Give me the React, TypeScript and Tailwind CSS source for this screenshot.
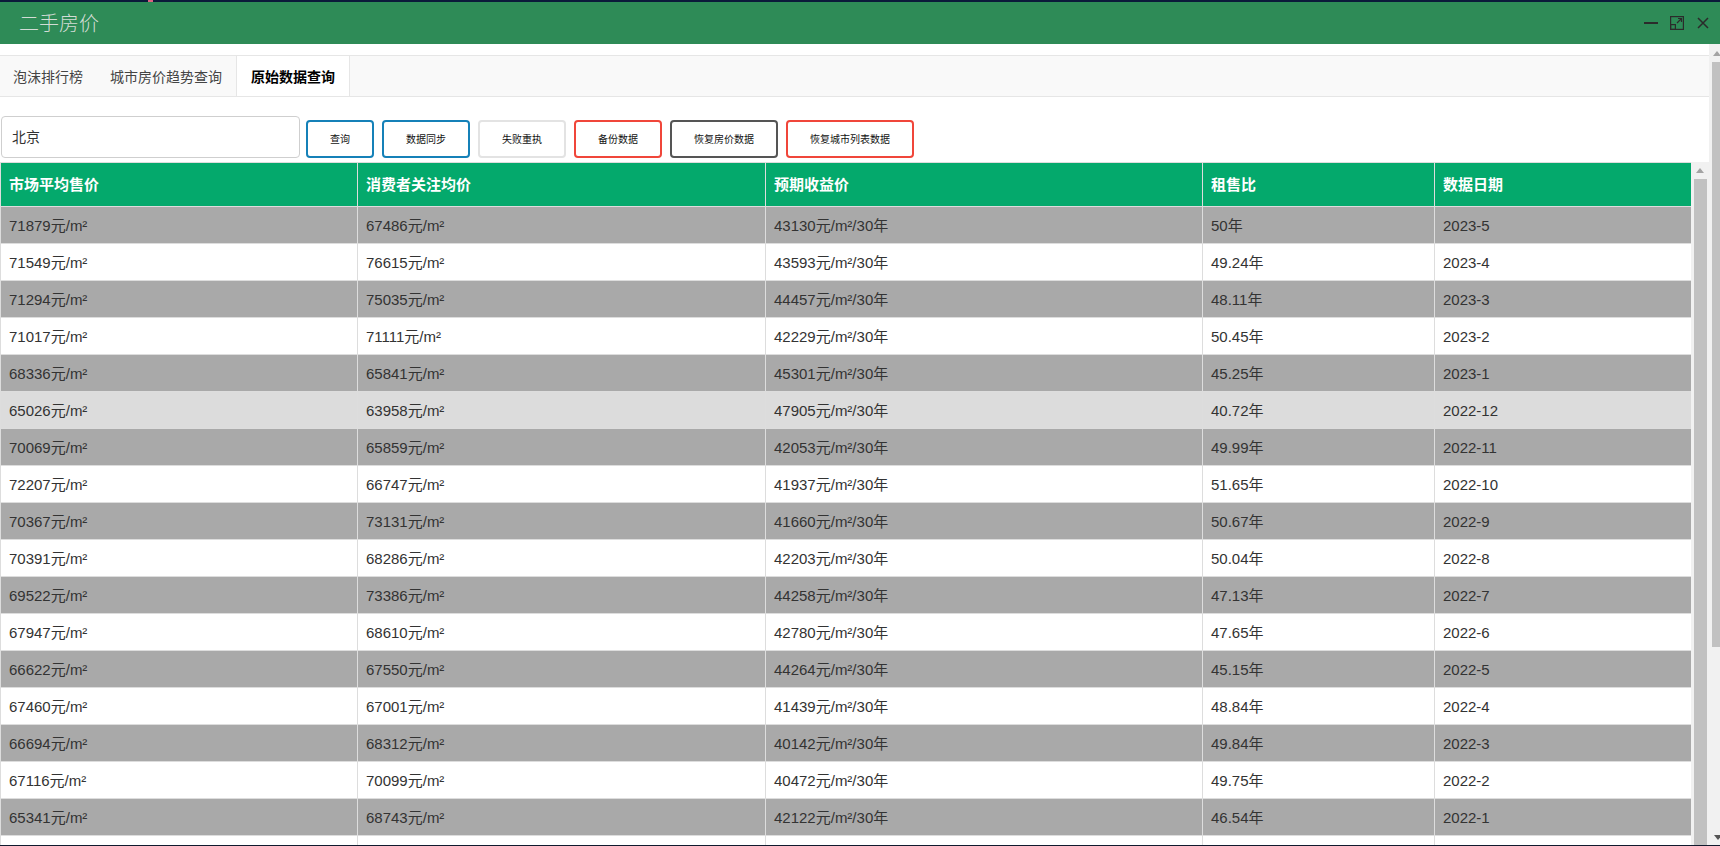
import React from 'react';

type Row = [string, string, string, string, string];

const rows: Row[] = [
  ['71879', '67486', '43130', '50', '2023-5'],
  ['71549', '76615', '43593', '49.24', '2023-4'],
  ['71294', '75035', '44457', '48.11', '2023-3'],
  ['71017', '71111', '42229', '50.45', '2023-2'],
  ['68336', '65841', '45301', '45.25', '2023-1'],
  ['65026', '63958', '47905', '40.72', '2022-12'],
  ['70069', '65859', '42053', '49.99', '2022-11'],
  ['72207', '66747', '41937', '51.65', '2022-10'],
  ['70367', '73131', '41660', '50.67', '2022-9'],
  ['70391', '68286', '42203', '50.04', '2022-8'],
  ['69522', '73386', '44258', '47.13', '2022-7'],
  ['67947', '68610', '42780', '47.65', '2022-6'],
  ['66622', '67550', '44264', '45.15', '2022-5'],
  ['67460', '67001', '41439', '48.84', '2022-4'],
  ['66694', '68312', '40142', '49.84', '2022-3'],
  ['67116', '70099', '40472', '49.75', '2022-2'],
  ['65341', '68743', '42122', '46.54', '2022-1'],
];

const headers = ['市场平均售价', '消费者关注均价', '预期收益价', '租售比', '数据日期'];
const colWidths = ['w-[357px]', 'w-[408px]', 'w-[437px]', 'w-[232px]', 'flex-1'];

const buttons = [
  { label: '查询', cls: 'border-[#1581b8]' },
  { label: '数据同步', cls: 'border-[#1581b8]' },
  { label: '失败重执', cls: 'border-[#e3e3e3]' },
  { label: '备份数据', cls: 'border-[#f0463a]' },
  { label: '恢复房价数据', cls: 'border-[#555555]' },
  { label: '恢复城市列表数据', cls: 'border-[#f0463a]' },
];

function rowBg(i: number) {
  if (i === 5) return 'bg-[#dcdcdc]';
  return i % 2 === 0 ? 'bg-[#a9a9a9]' : 'bg-white';
}

export default function App() {
  return (
    <div className="h-[846px] w-[1720px] overflow-hidden flex flex-col bg-white font-['Liberation_Sans','Noto_Sans_CJK_SC',sans-serif] text-[#333]">
      {/* top edge */}
      <div className="h-[2px] bg-[#0b1a3a] flex shrink-0">
        <div className="ml-[148px] w-[5px] bg-[#e0607e]" />
      </div>

      {/* title bar */}
      <div className="h-[42px] shrink-0 bg-[#2e8b57] flex items-center justify-between pl-[19px] pr-[11px]">
        <span className="text-[20px] text-[#d2dcd5] font-['Noto_Sans_CJK_SC',sans-serif] font-light leading-none">二手房价</span>
        <div className="flex items-center text-[#2b2b2b]">
          <svg width="14" height="14" viewBox="0 0 14 14">
            <rect x="0" y="6" width="14" height="2" fill="currentColor" />
          </svg>
          <svg width="14" height="14" viewBox="0 0 14 14" className="ml-[12px]" fill="none" stroke="currentColor" strokeWidth="1.2">
            <rect x="0.6" y="0.6" width="12.8" height="12.8" />
            <rect x="0.6" y="8.6" width="4.8" height="4.8" />
            <path d="M7 7 L11.5 2.5 M8 2.5 H11.5 V6" />
          </svg>
          <svg width="12" height="12" viewBox="0 0 12 12" className="ml-[13px]" fill="none" stroke="currentColor" strokeWidth="1.5">
            <path d="M1 1 L11 11 M11 1 L1 11" />
          </svg>
        </div>
      </div>

      <div className="flex-1 flex min-h-0">
        <div className="flex-1 flex flex-col min-w-0">
          {/* tabs */}
          <div className="mt-[11px] h-[42px] shrink-0 bg-[#f9f9f9] border-y border-[#e6e6e6] flex text-[14px] font-['Noto_Sans_CJK_SC',sans-serif]">
            <div className="px-[13px] flex items-center text-[#444]">泡沫排行榜</div>
            <div className="px-[14px] flex items-center text-[#444]">城市房价趋势查询</div>
            <div className="px-[14px] flex items-center bg-white border-x border-[#e6e6e6] font-bold text-black">原始数据查询</div>
          </div>

          {/* toolbar */}
          <div className="mt-[19px] h-[42px] shrink-0 flex items-end">
            <div className="ml-[1px] w-[299px] h-[42px] border border-[#cfcfcf] rounded-[4px] flex items-center pl-[10px] text-[14px] text-[#333]">
              北京
            </div>
            {buttons.map((b, i) => (
              <div
                key={b.label}
                className={`${i === 0 ? 'ml-[6px]' : 'ml-[8px]'} h-[38px] px-[22px] border-2 ${b.cls} rounded-[4px] flex items-center text-[10px] text-[#111] bg-white`}
              >
                {b.label}
              </div>
            ))}
          </div>

          {/* table */}
          <div className="mt-[4px] flex-1 flex min-h-0">
            <div className="flex-1 overflow-hidden border-l border-[#ddd]">
              <div className="h-[45px] flex bg-[#04a96c] border-t border-b border-[#ddd] text-white font-bold text-[15px] font-['Noto_Sans_CJK_SC',sans-serif]">
                {headers.map((h, i) => (
                  <div key={h} className={`${colWidths[i]} ${i < 4 ? 'border-r border-[#ddd]' : ''} pl-[8px] flex items-center shrink-0`}>
                    {h}
                  </div>
                ))}
              </div>
              {rows.map((r, i) => {
                const cells = [`${r[0]}元/m²`, `${r[1]}元/m²`, `${r[2]}元/m²/30年`, `${r[3]}年`, r[4]];
                return (
                  <div key={r[4]} className={`h-[37px] flex border-b border-[#ddd] text-[15px] ${rowBg(i)}`}>
                    {cells.map((c, j) => (
                      <div key={j} className={`${colWidths[j]} ${j < 4 ? 'border-r border-[#ddd]' : ''} pl-[8px] pt-[2px] flex items-center shrink-0`}>
                        {c}
                      </div>
                    ))}
                  </div>
                );
              })}
              {/* next row, only its top edge is in view */}
              <div className="h-[37px] flex bg-white">
                {colWidths.map((w, j) => (
                  <div key={j} className={`${w} ${j < 4 ? 'border-r border-[#ddd]' : ''} shrink-0`} />
                ))}
              </div>
            </div>

            {/* inner scrollbar */}
            <div className="w-[18px] bg-[#f1f1f1] flex flex-col items-center">
              <div className="mt-[6px] w-0 h-0 border-x-[4px] border-x-transparent border-b-[5px] border-b-[#a3a3a3]" />
              <div className="mt-[6px] w-[13px] flex-1 bg-[#c1c1c1]" />
            </div>
          </div>
        </div>

        {/* outer scrollbar */}
        <div className="w-[11px] bg-[#f1f1f1] flex flex-col">
          <div className="mt-[7px] ml-[4px] w-0 h-0 border-x-[4px] border-x-transparent border-b-[5px] border-b-[#a3a3a3]" />
          <div className="mt-[6px] ml-[3px] w-[8px] h-[585px] bg-[#c1c1c1]" />
          <div className="mt-auto mb-[5px] ml-[5px] w-0 h-0 border-x-[4px] border-x-transparent border-t-[5px] border-t-[#555]" />
        </div>
      </div>

      <div className="h-[1px] shrink-0 bg-[#111a2e]" />
    </div>
  );
}
